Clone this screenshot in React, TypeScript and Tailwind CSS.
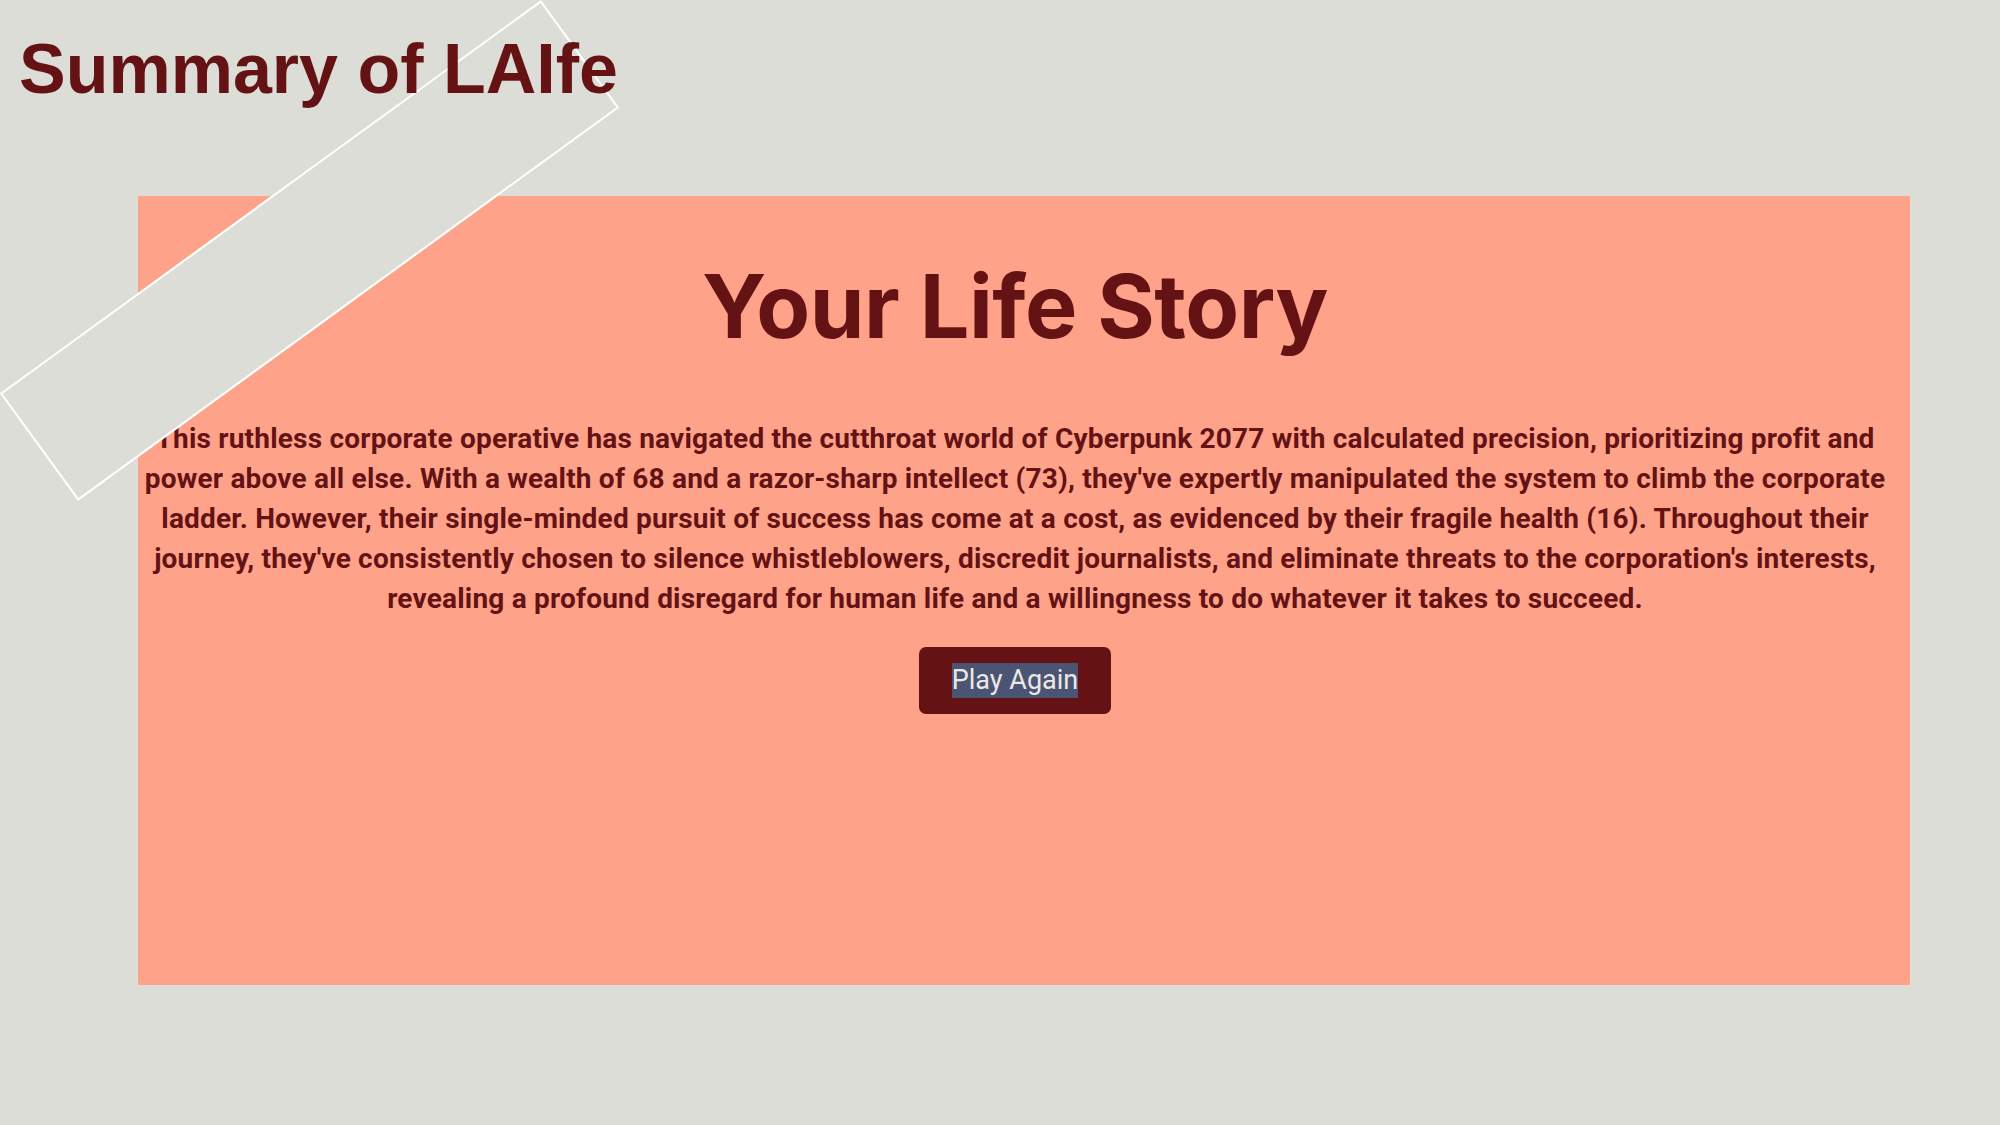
import React from "react";

const story =
  "This ruthless corporate operative has navigated the cutthroat world of Cyberpunk 2077 with calculated precision, prioritizing profit and power above all else. With a wealth of 68 and a razor-sharp intellect (73), they've expertly manipulated the system to climb the corporate ladder. However, their single-minded pursuit of success has come at a cost, as evidenced by their fragile health (16). Throughout their journey, they've consistently chosen to silence whistleblowers, discredit journalists, and eliminate threats to the corporation's interests, revealing a profound disregard for human life and a willingness to do whatever it takes to succeed.";

export default function App() {
  return (
    <div className="relative min-h-screen w-full overflow-hidden bg-[#dcddd7]">
      {/* tilted paper strip laid over the card */}
      <div
        aria-hidden
        className="absolute left-[-25px] top-[184px] z-10 h-[133px] w-[669px] -rotate-[36deg] border-2 border-white bg-[#dcddd7]"
      />

      <h1 className="relative z-20 ml-[19px] pt-[34px] font-['Liberation_Sans',Arial,sans-serif] text-[70px] font-bold leading-none text-[#641214]">
        Summary of LAIfe
      </h1>

      <section className="ml-[138px] mt-[92px] flex h-[789px] w-[1772px] flex-col items-center bg-[#fea28a] pr-[18px] pt-[66px]">
        <h2 className="font-['Inter',sans-serif] text-[88px] font-bold leading-none tracking-[-0.5px] text-[#641214]">
          Your Life Story
        </h2>
        <p className="mt-[69px] text-center font-['Roboto',sans-serif] text-[28px] font-bold leading-[40px] tracking-[0.2px] text-[#641214]">
          {story}
        </p>
        <button className="mt-[28px] rounded-[7px] bg-[#641214] px-[33px] py-[16px]">
          <span className="inline-block bg-[#4b5472] font-['Roboto',sans-serif] text-[27px] leading-[35px] text-[#ece8e4]">
            Play Again
          </span>
        </button>
      </section>
    </div>
  );
}
